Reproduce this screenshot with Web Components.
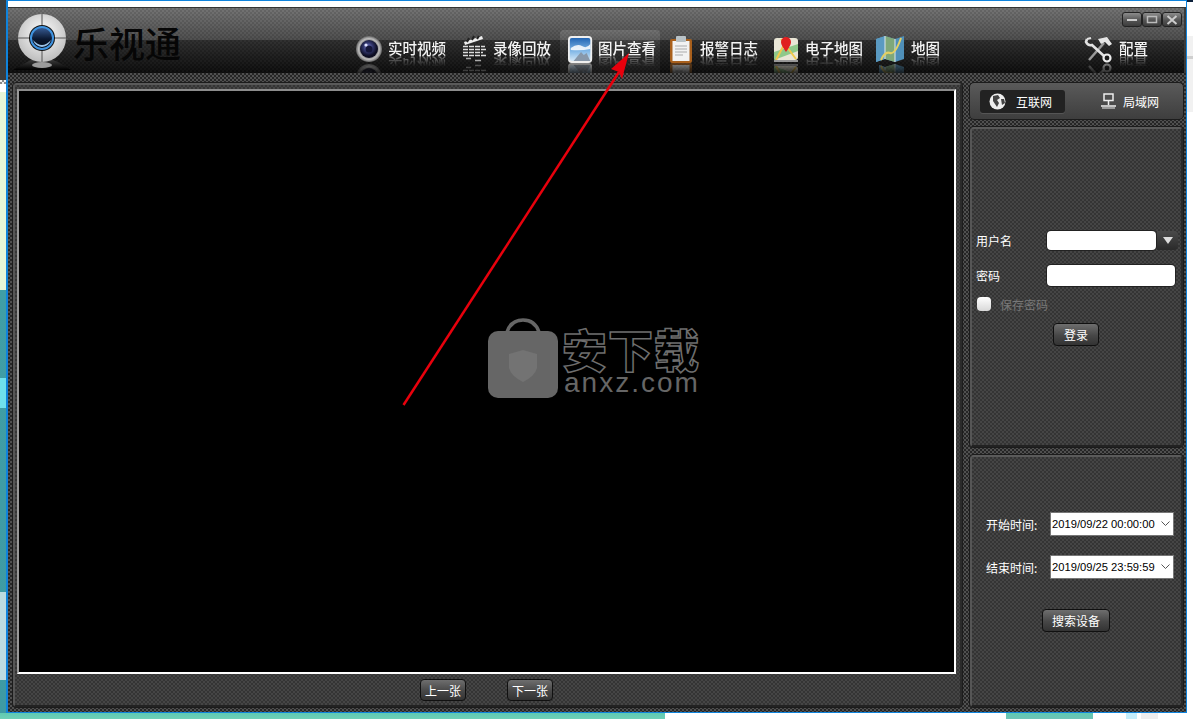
<!DOCTYPE html>
<html lang="zh">
<head>
<meta charset="utf-8">
<title>乐视通</title>
<style>
  html, body { margin: 0; height: 100%; overflow: hidden; background: #fff; }
  body { font-family: "Liberation Sans", "Noto Sans CJK SC", sans-serif; color: #fff; }
</style>
</head>
<body>
<desk-top>
  <app-window>
    <title-bar>
      <nav-item icon="camera" label="实时视频" style="width:105px"></nav-item>
      <nav-item icon="clapper" label="录像回放" style="width:105px"></nav-item>
      <nav-item icon="picture" label="图片查看" active style="width:100px;margin-right:2px"></nav-item>
      <nav-item icon="clipboard" label="报警日志" style="width:105px"></nav-item>
      <nav-item icon="pin" label="电子地图" style="width:106px"></nav-item>
      <nav-item icon="map" label="地图" style="width:208px"></nav-item>
      <nav-item icon="tools" label="配置" style="width:90px"></nav-item>
    </title-bar>
    <div slot="main-left">
      <picture-panel></picture-panel>
    </div>
    <net-tabs slot="side-top"></net-tabs>
    <login-panel slot="side-mid"></login-panel>
    <search-panel slot="side-bottom"></search-panel>
  </app-window>
</desk-top>
<red-arrow></red-arrow>

<script>
// pattern used by all the skinned panels
const PANEL_CSS = `
  background: repeating-conic-gradient(#343434 0 25%, #454545 0 50%) 0 0 / 4px 4px;
  border: 2px solid; border-color: #5a5a5a #2a2a2a #222 #565656;
  outline: 1px solid #1c1c1c; border-radius: 3px; box-sizing: border-box;
`;

class DeskTop extends HTMLElement {
  constructor() {
    super();
    this.attachShadow({ mode: 'open' }).innerHTML = `
      <style>
        :host {
          display: block; width: 1193px; height: 719px; box-sizing: border-box;
          padding: 0 6px 6px 6px;
          background:
            linear-gradient(#0b1f3a, #0b1f3a) 1187px 0 / 6px 2px no-repeat,
            linear-gradient(#cfcfcf, #cfcfcf) 1187px 56px / 6px 3px no-repeat,
            linear-gradient(#f1f1f1, #f1f1f1) 1187px 36px / 6px 76px no-repeat,
            linear-gradient(#5fc9b1, #6fd0b8) 0 713px / 665px 6px no-repeat,
            linear-gradient(#5fc9b1, #6fc4b8) 1006px 713px / 87px 6px no-repeat,
            linear-gradient(#c4eefc, #c4eefc) 1126px 713px / 11px 6px no-repeat,
            linear-gradient(#eeeeee, #eeeeee) 1141px 713px / 17px 6px no-repeat,
            linear-gradient(#bcdbe0, #bcdbe0) 0 592px / 6px 88px no-repeat,
            linear-gradient(#6fe0ec, #6fe0ec) 0 378px / 6px 30px no-repeat,
            linear-gradient(#3c3c3c, #3c3c3c) 0 0 / 6px 80px no-repeat,
            repeating-conic-gradient(#888 0 25%, #eee 0 50%) 0 80px / 4px 4px repeat-x,
            linear-gradient(#e6f5d8, #e6f5d8) 0 92px / 6px 198px no-repeat,
            linear-gradient(#409ea6, #3e9aa4) 0 290px / 6px 425px no-repeat,
            #fff;
        }
      </style>
      <slot></slot>`;
  }
}
customElements.define('desk-top', DeskTop);

class AppWindow extends HTMLElement {
  constructor() {
    super();
    this.attachShadow({ mode: 'open' }).innerHTML = `
      <style>
        :host {
          display: flex; flex-direction: column; height: 713px; box-sizing: border-box;
          border: 1px solid #0f83dc; border-left-width: 2px; background: #fff;
        }
        .whitebar { height: 6px; flex: none; }
        .skin {
          flex: 1; display: flex; flex-direction: column; min-height: 0;
          background: repeating-conic-gradient(#262626 0 25%, #505050 0 50%) 0 0 / 4px 4px;
        }
        .cols {
          flex: 1; display: grid; grid-template-columns: 949px 213px; column-gap: 8px;
          padding: 10px 3px 5px 5px; min-height: 0;
        }
        .side { display: grid; grid-template-columns: 213px; grid-template-rows: 36px 320px 1fr; row-gap: 8px; min-height: 0; }
        ::slotted([slot="main-left"]) { display: grid; min-height: 0; }
      </style>
      <div class="whitebar"></div>
      <div class="skin">
        <slot></slot>
        <div class="cols">
          <slot name="main-left"></slot>
          <div class="side">
            <slot name="side-top"></slot>
            <slot name="side-mid"></slot>
            <slot name="side-bottom"></slot>
          </div>
        </div>
      </div>`;
  }
}
customElements.define('app-window', AppWindow);

class TitleBar extends HTMLElement {
  constructor() {
    super();
    this.attachShadow({ mode: 'open' }).innerHTML = `
      <style>
        :host {
          display: grid; grid-template-columns: 342px 1fr; grid-template-rows: 22px 44px;
          height: 66px; flex: none; overflow: hidden; box-sizing: border-box;
          border-top: 1px solid #333; border-right: 2px solid #3a3a3a;
          background:
            repeating-conic-gradient(rgba(0,0,0,.09) 0 25%, rgba(255,255,255,.02) 0 50%) 0 0 / 4px 4px,
            linear-gradient(#717171 0, #4c4c4c 32px, #2e2e2e 32px, #0c0c0c 100%);
        }
        .logo { grid-row: 1 / 3; display: flex; align-items: flex-start; }
        .logo svg { margin: 5px 0 0 5px; flex: none; }
        .logo span {
          font: 500 36px/1 "Noto Sans CJK SC", sans-serif; color: #060606;
          margin: 16px 0 0 2px; white-space: nowrap;
        }
        .ctrl { display: flex; justify-content: flex-end; padding: 4px 2px 0 0; }
        .ctrl i {
          display: grid; place-items: center; width: 20px; height: 15px; box-sizing: border-box;
          background: linear-gradient(#8c8c8c, #555 55%, #3c3c3c); border: 1px solid #222; border-radius: 3px;
        }
        nav { display: flex; align-items: stretch; }
      </style>
      <div class="logo">
        <svg width="58" height="58" viewBox="0 0 58 58">
          <defs>
            <radialGradient id="f" cx=".5" cy=".4" r=".6"><stop offset="0" stop-color="#fff"/><stop offset="1" stop-color="#bdbdbd"/></radialGradient>
            <linearGradient id="l" x1="0" y1="0" x2="0" y2="1"><stop offset="0" stop-color="#3a5f99"/><stop offset=".55" stop-color="#0b1830"/><stop offset="1" stop-color="#050a14"/></linearGradient>
            <linearGradient id="b" x1="0" y1="0" x2="0" y2="1"><stop offset="0" stop-color="#3a3a3a"/><stop offset="1" stop-color="#000"/></linearGradient>
          </defs>
          <path d="M0 57 Q12 50 18 47 H40 Q48 50 58 57Z" fill="url(#b)"/>
          <ellipse cx="29" cy="52" rx="10" ry="3" fill="#9a9a9a"/>
          <circle cx="29" cy="25" r="24" fill="url(#f)"/>
          <path d="M29 1V49M5 25H53" stroke="#555" stroke-width="1"/>
          <circle cx="29" cy="25" r="13" fill="#111"/>
          <circle cx="29" cy="25" r="11" fill="url(#l)" stroke="#3f93e0" stroke-width="2"/>
          <path d="M20 27 Q29 37 38 27 Q36 33 29 34 Q22 33 20 27Z" fill="#9cc3e8"/>
        </svg>
        <span>乐视通</span>
      </div>
      <div class="ctrl">
        <i><svg width="12" height="8"><rect x="1" y="3" width="10" height="2" fill="#ccc"/></svg></i>
        <i><svg width="12" height="9"><rect x="1.5" y="1.5" width="9" height="6" fill="none" stroke="#bbb" stroke-width="1.5"/></svg></i>
        <i><svg width="12" height="10"><path d="M1.5 1 10.5 9M10.5 1 1.5 9" stroke="#ccc" stroke-width="2"/></svg></i>
      </div>
      <nav><slot></slot></nav>`;
  }
}
customElements.define('title-bar', TitleBar);

const NAV_ICONS = {
  camera: `<defs><radialGradient id="g"><stop offset=".55" stop-color="#666"/><stop offset=".8" stop-color="#bbb"/><stop offset="1" stop-color="#666"/></radialGradient>
      <radialGradient id="n" cx=".45" cy=".4"><stop offset="0" stop-color="#8a8fe0"/><stop offset=".5" stop-color="#33386e"/><stop offset="1" stop-color="#0c0d22"/></radialGradient></defs>
    <circle cx="13" cy="13" r="13" fill="url(#g)"/><circle cx="13" cy="13" r="9" fill="url(#n)"/><circle cx="13" cy="13" r="3.5" fill="#15173a"/><circle cx="10" cy="9" r="1.6" fill="#dfe3ff"/>`,
  clapper: `<path d="M3 6 21 0l1 3L4 9Z" fill="#eee"/><path d="M6 6l2-4M11 4l2-4M16 3l2-3" stroke="#222" stroke-width="2"/>
    <path d="M2 10.500H24M2 13.500H25M2 16.500H22M2 19.500H25" stroke="#ddd" stroke-width="1.400" stroke-dasharray="5 1"/><path d="M5 22.500H10M14 24.500H20" stroke="#aaa" stroke-width="1.500"/>`,
  picture: `<defs><linearGradient id="s" x1="0" y1="0" x2="0" y2="1"><stop offset="0" stop-color="#1b5fb0"/><stop offset=".55" stop-color="#7fb6e6"/><stop offset="1" stop-color="#dcecf8"/></linearGradient></defs>
    <g transform="translate(2 0) scale(.93 1)"><rect x="1" y="1" width="24" height="25" rx="3" fill="url(#s)" stroke="#efefef" stroke-width="2"/>
    <path d="M3 12Q10 7 15 10T24 8V13Q14 15 3 14Z" fill="#fff" opacity=".85"/><path d="M6 25 14 16l3 3 3-2 4 8Z" fill="#8898aa"/></g>`,
  clipboard: `<rect x="2" y="3" width="22" height="24" rx="2" fill="#a9601c"/><rect x="4.500" y="5" width="17" height="20" fill="#f2f2f2"/>
    <rect x="8" y="0" width="10" height="6" rx="1" fill="#b9c2c6"/><path d="M7 10H19M7 13H19M7 16H19M7 19H15" stroke="#aaa"/>`,
  pin: `<rect x="1" y="2" width="24" height="22" rx="3" fill="#e9e6d6"/><path d="M1 16 25 8V15L1 24Z" fill="#8fc98a"/><path d="M3 24 14 3M8 3l15 20" stroke="#f0c94c" stroke-width="2"/>
    <path d="M13 16C9 10 8 8 8 6a5 5 0 0 1 10 0C18 8 17 10 13 16Z" fill="#e02020"/><rect x="1" y="24" width="24" height="2" fill="#999"/>`,
  map: `<g transform="translate(-3 0)"><path d="M0 3 9 0l10 3 9-3V23l-9 3-10-3-9 3Z" fill="#4f8fb8"/><path d="M9 0 19 3V26L9 23Z" fill="#7fa87a"/><path d="M0 3 9 0V23L0 26Z" fill="#5a9ac2"/>
    <path d="M9 0V23M19 3V26" stroke="#dfe8ee"/><path d="M5 24Q9 15 14 17T25 2" fill="none" stroke="#e3cf63" stroke-width="2"/></g>`,
  tools: `<g transform="translate(-2 0)"><path d="M4 24 19 7" stroke="#9a9a9a" stroke-width="2.500"/><path d="M13 3 22 1l5 7-3 2-4-4-4 2Z" fill="#e6e6e6"/>
    <path d="M2 3 1 6Q3 10 7 9L19 20" fill="none" stroke="#e2e2e2" stroke-width="2.600"/><path d="M2 3 6 2" stroke="#e2e2e2" stroke-width="2"/><circle cx="22" cy="22" r="3.500" fill="none" stroke="#eee" stroke-width="2.200"/></g>`
};

class NavItem extends HTMLElement {
  constructor() {
    super();
    const active = this.hasAttribute('active');
    this.attachShadow({ mode: 'open' }).innerHTML = `
      <style>
        :host {
          display: block; box-sizing: border-box; height: 44px; padding-left: 6px;
          border-radius: 4px 4px 0 0;
          ${active ? 'background: linear-gradient(rgba(255,255,255,.14), rgba(255,255,255,.06) 40%, rgba(255,255,255,.04));' : ''}
        }
        .row { display: flex; align-items: center; height: 32px; margin-top: 3px; }
        svg {
          width: 26px; height: 27px; flex: none; margin-right: 6px; overflow: visible;
          -webkit-box-reflect: below 0 linear-gradient(transparent 50%, rgba(255,255,255,.5));
        }
        span {
          font: 500 14.500px/18px "Noto Sans CJK SC", sans-serif; color: #f4f4f4; white-space: nowrap;
          margin-bottom: 2px;
          -webkit-box-reflect: below -2px linear-gradient(transparent 35%, rgba(255,255,255,.45));
        }
      </style>
      <div class="row">
        <svg viewBox="0 0 26 27">${NAV_ICONS[this.getAttribute('icon')]}</svg>
        <span>${this.getAttribute('label')}</span>
      </div>`;
  }
}
customElements.define('nav-item', NavItem);

class SkinButton extends HTMLElement {
  constructor() {
    super();
    this.attachShadow({ mode: 'open' }).innerHTML = `
      <style>
        :host {
          display: inline-flex; align-items: center; justify-content: center; box-sizing: border-box;
          height: 23px; border: 1px solid #101010; border-radius: 4px; font-size: 12px; color: #fff;
          background: linear-gradient(#6e6e6e, #474747 55%, #333);
          font-family: "Noto Sans CJK SC", sans-serif;
        }
      </style>
      <slot></slot>`;
  }
}
customElements.define('skin-button', SkinButton);

class PicturePanel extends HTMLElement {
  constructor() {
    super();
    this.attachShadow({ mode: 'open' }).innerHTML = `
      <style>
        :host {
          display: grid; grid-template-rows: 585px 1fr; ${PANEL_CSS}
          padding: 4px 4px 0 2px; min-height: 0;
        }
        .screen {
          position: relative; background: #000; box-sizing: border-box;
          border: 2px solid; border-color: #8c8c8c #fff #fff #999;
        }
        .pager { display: flex; justify-content: center; align-items: center; gap: 41px; padding-top: 1px; }
        skin-button { width: 46px; height: 22px; }
        .mark {
          position: absolute; left: 468px; top: 227px; display: flex; gap: 3px; color: #666;
          font-family: "Liberation Sans", "Noto Sans CJK SC", sans-serif;
        }
        .word { padding-top: 9px; display: flex; flex-direction: column; align-items: flex-start; }
        .cn {
          font: 900 45px/44px "Noto Sans CJK SC", sans-serif; color: #000; white-space: nowrap;
          -webkit-text-stroke: 1.500px #6e6e6e; letter-spacing: 1px;
        }
        .en { font-size: 28px; line-height: 24px; letter-spacing: 2px; margin-left: 2px; white-space: nowrap; }
      </style>
      <div class="screen">
        <div class="mark">
          <svg width="72" height="80" viewBox="0 0 72 80">
            <path d="M20 14Q24 2 36 2T52 14" fill="none" stroke="#666" stroke-width="3.500"/>
            <rect x="1" y="13" width="70" height="67" rx="10" fill="#666"/>
            <path d="M36 32 22 36V50Q24 58 36 64 48 58 50 50V36Z" fill="#737373"/>
          </svg>
          <div class="word"><span class="cn">安下载</span><span class="en">anxz.com</span></div>
        </div>
      </div>
      <div class="pager">
        <skin-button>上一张</skin-button>
        <skin-button>下一张</skin-button>
      </div>`;
  }
}
customElements.define('picture-panel', PicturePanel);

class NetTabs extends HTMLElement {
  constructor() {
    super();
    this.attachShadow({ mode: 'open' }).innerHTML = `
      <style>
        :host {
          display: flex; align-items: center; box-sizing: border-box; border-radius: 4px;
          outline: 1px solid #1c1c1c; padding-left: 10px;
          background: linear-gradient(#5a5a5a, #3e3e3e);
          font: 12px "Noto Sans CJK SC", sans-serif; color: #fff;
        }
        .tab { display: flex; align-items: center; height: 23px; box-sizing: border-box; white-space: nowrap; }
        .on { width: 85px; padding-left: 9px; gap: 10px; background: #222; border-radius: 3px; box-shadow: 0 1px 0 #555; }
        .off { margin-left: 35px; gap: 6px; }
      </style>
      <div class="tab on">
        <svg width="17" height="17" viewBox="0 0 17 17"><circle cx="8.500" cy="8.500" r="8" fill="#eee"/>
          <path d="M4 3 9 2l2 3-3 2 2 3-2 4-2-3-2-3ZM12 6h3l1 4-3 2Z" fill="#444"/></svg>
        互联网
      </div>
      <div class="tab off">
        <svg width="17" height="16" viewBox="0 0 17 16" fill="none" stroke="#eee" stroke-width="1.500">
          <rect x="4" y="1" width="9" height="6.500"/><path d="M8.500 8V12M1 13H16"/><path d="M2 15H15" stroke-width="1"/></svg>
        局域网
      </div>`;
  }
}
customElements.define('net-tabs', NetTabs);

class LoginPanel extends HTMLElement {
  constructor() {
    super();
    this.attachShadow({ mode: 'open' }).innerHTML = `
      <style>
        :host {
          display: block; ${PANEL_CSS} padding: 102px 3px 0 4px; font: 12px "Noto Sans CJK SC", sans-serif;
        }
        .grid { display: grid; grid-template-columns: 71px 1fr; align-items: center; }
        .r1 { height: 19px; margin-bottom: 15px; }
        .r2 { height: 21px; margin-bottom: 11px; }
        .user { display: flex; align-items: stretch; height: 19px; }
        .input { background: #fff; border-radius: 4px; box-shadow: 0 0 0 1px #222; }
        .user .input { width: 109px; }
        .drop {
          width: 21px; margin-left: 1px; display: grid; place-items: center;
          background: linear-gradient(#4a4a4a, #2a2a2a); border-radius: 0 4px 4px 0;
        }
        .pass { height: 21px; width: 128px; }
        .save { display: flex; align-items: center; gap: 9px; height: 14px; margin: 0 0 12px 1px; color: #787878; }
        .save i { width: 14px; height: 14px; border-radius: 4px; background: linear-gradient(#fff, #d8d8d8); }
        .go { display: flex; padding-left: 77px; }
        skin-button { width: 46px; }
      </style>
      <div class="grid r1">
        <span>用户名</span>
        <div class="user"><div class="input"></div>
          <div class="drop"><svg width="10" height="7"><path d="M0 0H10L5 7Z" fill="#ddd"/></svg></div></div>
      </div>
      <div class="grid r2"><span>密码</span><div class="input pass"></div></div>
      <div class="save"><i></i><span>保存密码</span></div>
      <div class="go"><skin-button>登录</skin-button></div>`;
  }
}
customElements.define('login-panel', LoginPanel);

class DateField extends HTMLElement {
  constructor() {
    super();
    this.attachShadow({ mode: 'open' }).innerHTML = `
      <style>
        :host {
          display: flex; align-items: center; justify-content: space-between; box-sizing: border-box;
          width: 124px; height: 24px; padding: 0 3px 0 1px; background: #fff; border: 1px solid #777;
          font: 11.200px "Liberation Sans", sans-serif; color: #000; white-space: nowrap;
        }
      </style>
      <span><slot></slot></span>
      <svg width="9" height="6" viewBox="0 0 9 6"><path d="M.500 .500 4.500 4.500 8.500 .500" fill="none" stroke="#555"/></svg>`;
  }
}
customElements.define('date-field', DateField);

class SearchPanel extends HTMLElement {
  constructor() {
    super();
    this.attachShadow({ mode: 'open' }).innerHTML = `
      <style>
        :host {
          display: block; ${PANEL_CSS} padding: 55px 7px 0 14px; font: 12px "Noto Sans CJK SC", sans-serif;
          min-height: 0;
        }
        .row { display: flex; align-items: center; height: 24px; margin-bottom: 19px; }
        .row span { width: 64px; flex: none; white-space: nowrap; }
        .go { display: flex; padding: 11px 0 0 56px; }
        skin-button { width: 68px; }
      </style>
      <div class="row"><span>开始时间:</span><date-field>2019/09/22 00:00:00</date-field></div>
      <div class="row"><span>结束时间:</span><date-field>2019/09/25 23:59:59</date-field></div>
      <div class="go"><skin-button>搜索设备</skin-button></div>`;
  }
}
customElements.define('search-panel', SearchPanel);

class RedArrow extends HTMLElement {
  constructor() {
    super();
    this.attachShadow({ mode: 'open' }).innerHTML = `
      <style>
        :host { position: absolute; left: 0; top: 0; width: 1193px; height: 719px; pointer-events: none; }
      </style>
      <svg width="1193" height="719">
        <path d="M403.500 405 619 72" stroke="#e8000c" stroke-width="2.500"/>
        <path d="M629 53 611 69 619 72 622 79Z" fill="#e8000c"/>
      </svg>`;
  }
}
customElements.define('red-arrow', RedArrow);
</script>
</body>
</html>
